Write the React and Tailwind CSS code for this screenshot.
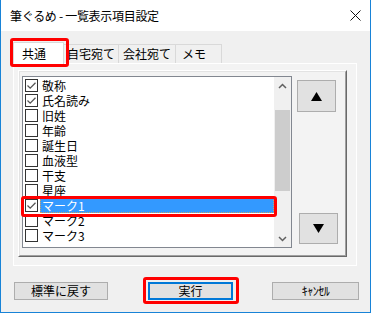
import React from "react";

const rows = [
  { t: "敬称", c: true },
  { t: "氏名読み", c: true },
  { t: "旧姓" },
  { t: "年齢" },
  { t: "誕生日" },
  { t: "血液型" },
  { t: "干支" },
  { t: "星座" },
  { t: "マーク1", c: true, s: true },
  { t: "マーク2" },
  { t: "マーク3" },
];

function Check({ on }) {
  return (
    <div className="w-[13px] h-[13px] border border-[#333333] bg-white shrink-0 flex items-center justify-center">
      {on && (
        <svg width="11" height="11" viewBox="0 0 11 11">
          <path d="M1.5 5.5 L4.2 8.2 L9.5 2.8" fill="none" stroke="#555555" strokeWidth="1.3" />
        </svg>
      )}
    </div>
  );
}

function Chevron({ up }) {
  return (
    <svg width="9" height="6" viewBox="0 0 9 6">
      <path d={up ? "M1 5 L4.5 1.5 L8 5" : "M1 1 L4.5 4.5 L8 1"} fill="none" stroke="#606060" strokeWidth="1.5" />
    </svg>
  );
}

export default function App() {
  const font = { fontFamily: '"Noto Sans CJK JP", "Noto Sans", sans-serif' };
  return (
    <div
      className="relative w-[371px] h-[313px] bg-[#f0f0f0] border-l border-r border-b border-[#1883d7] flex flex-col text-[12px] text-black"
      style={font}
    >
      {/* title bar */}
      <div className="h-[31px] bg-white flex items-center justify-between pl-[9px] pr-[9px] shrink-0">
        <span className="text-[12px] leading-[14px] tracking-[-0.3px]">筆ぐるめ - 一覧表示項目設定</span>
        <svg width="11" height="11" viewBox="0 0 11 11">
          <path d="M0.5 0.5 L10.5 10.5 M10.5 0.5 L0.5 10.5" stroke="#111" strokeWidth="1" />
        </svg>
      </div>

      {/* tabs */}
      <div className="mt-[11px] ml-[12px] flex items-end h-[21px] shrink-0">
        <div className="relative z-10 -mb-px h-[22px] w-[51px] bg-white border-t border-l border-r border-[#d9d9d9] flex items-center pl-[8px] leading-[14px]">
          共通
        </div>
        <div className="h-[19px] w-[55px] bg-[#f0f0f0] border-t border-r border-[#d9d9d9] flex items-center justify-center leading-[14px]">
          自宅宛て
        </div>
        <div className="h-[19px] w-[57px] bg-[#f0f0f0] border-t border-r border-[#d9d9d9] flex items-center justify-center leading-[14px]">
          会社宛て
        </div>
        <div className="h-[19px] w-[46px] bg-[#f0f0f0] border-t border-r border-[#d9d9d9] flex items-center pl-[6px] leading-[14px]">
          メモ
        </div>
      </div>

      {/* panel */}
      <div className="ml-[12px] w-[344px] h-[203px] border border-[#ffffff] bg-[#f3f3f3] shrink-0 pl-[4px] pt-[6px]">
        <div className="w-[329px] h-[187px] border-t border-l border-white border-r border-b border-r-[#696969] border-b-[#696969]">
          <div className="w-full h-full border-t border-l border-[#e3e3e3] border-r border-b border-r-[#a0a0a0] border-b-[#a0a0a0] flex items-start pl-[2px] pt-[4px]">
            {/* listbox */}
            <div className="w-[270px] h-[172px] border border-[#828790] bg-white flex">
              <div className="flex-1 pt-[1px] pl-[2px]">
                {rows.map((r) => (
                  <div key={r.t} className="h-[15px] flex items-center">
                    <Check on={r.c} />
                    <div
                      className={
                        r.s
                          ? "ml-[2px] flex-1 h-[15px] bg-[#3399ff] text-white border border-dotted border-[#d0a060] flex items-center pl-[1px] text-[12px] leading-[13px]"
                          : "ml-[2px] flex-1 h-[15px] flex items-center pl-[2px] text-[12px] leading-[13px]"
                      }
                    >
                      {r.t}
                    </div>
                  </div>
                ))}
              </div>
              {/* scrollbar */}
              <div className="w-[17px] h-full bg-[#f0f0f0] flex flex-col items-center">
                <div className="h-[17px] w-full flex items-center justify-center">
                  <Chevron up />
                </div>
                <div className="h-[16px]" />
                <div className="h-[81px] w-[15px] bg-[#cdcdcd]" />
                <div className="flex-1" />
                <div className="h-[17px] w-full flex items-center justify-center">
                  <Chevron />
                </div>
              </div>
            </div>
            {/* up/down buttons */}
            <div className="ml-[5px] mt-[4px] h-[164px] flex flex-col justify-between">
              <div className="w-[39px] h-[32px] bg-[#e1e1e1] border border-[#adadad] flex items-center justify-center">
                <svg width="11" height="9" viewBox="0 0 11 9">
                  <path d="M5.5 0 L11 9 L0 9 Z" fill="#000" />
                </svg>
              </div>
              <div className="ml-[2px] w-[39px] h-[31px] bg-[#e1e1e1] border border-[#adadad] flex items-center justify-center">
                <svg width="11" height="9" viewBox="0 0 11 9">
                  <path d="M0 0 L11 0 L5.5 9 Z" fill="#000" />
                </svg>
              </div>
            </div>
          </div>
        </div>
      </div>

      {/* bottom buttons */}
      <div className="mt-[16px] ml-[13px] flex items-center shrink-0">
        <div className="w-[94px] h-[18px] bg-[#e1e1e1] border border-[#adadad] flex items-center justify-center leading-[14px]">
          標準に戻す
        </div>
        <div className="ml-[40px] w-[85px] h-[18px] bg-[#e1e1e1] border-2 border-[#0078d7] flex items-center justify-center leading-[14px]">
          実行
        </div>
        <div className="ml-[39px] w-[87px] h-[18px] bg-[#e1e1e1] border border-[#adadad] flex items-center justify-center leading-[14px] text-[12px] tracking-[-0.5px]">
          ｷｬﾝｾﾙ
        </div>
      </div>

      {/* red highlight overlays */}
      <div className="absolute left-[9px] top-[38px] w-[59px] h-[29px] border-[3px] border-[#ff0000] rounded-[3px] z-20" />
      <div className="absolute left-[20px] top-[196px] w-[256px] h-[21px] border-[3px] border-[#ff0000] rounded-[3px] z-20" />
      <div className="absolute left-[142px] top-[277px] w-[96px] h-[27px] border-[3px] border-[#ff0000] rounded-[3px] z-20" />
    </div>
  );
}
